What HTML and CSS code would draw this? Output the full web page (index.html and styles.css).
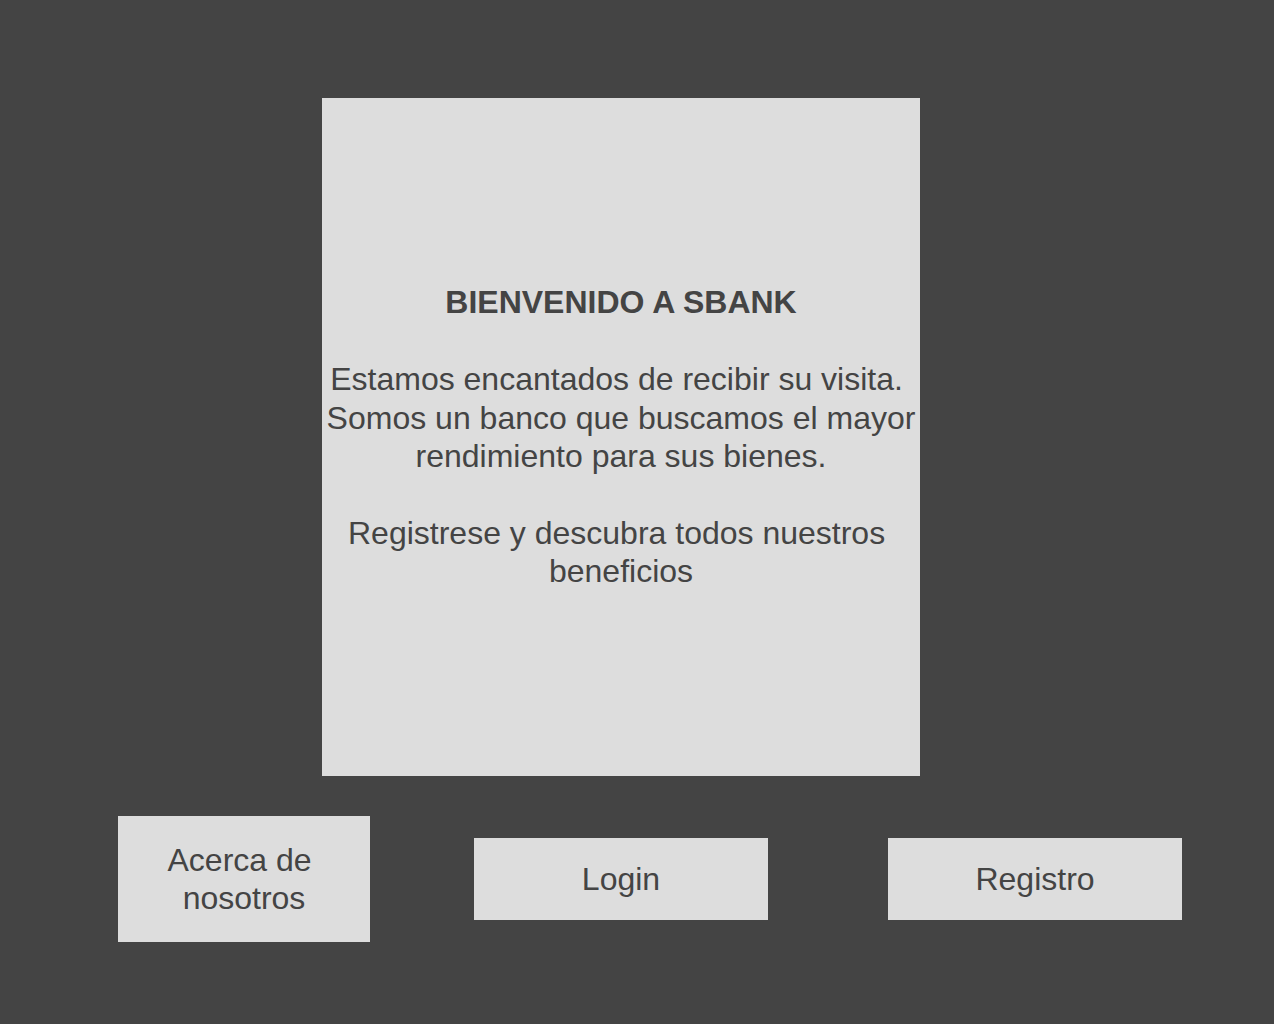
FILE: index.html
```html
<!DOCTYPE html>
<html lang="es">
<head>
    <meta charset="UTF-8">
    <meta name="viewport" content="width=device-width, initial-scale=1.0">
    <title>SBank</title>
    <link rel="stylesheet" href="styles.css">
</head>
<body>
<div class="page">
    <div class="welcome-panel">
        <div class="welcome-text">
            <strong>BIENVENIDO A SBANK</strong><br><br>
            Estamos encantados de recibir su visita.&nbsp; Somos un banco que buscamos el mayor rendimiento para sus bienes.<br><br>
            Registrese y descubra todos nuestros&nbsp; beneficios
        </div>
    </div>

    <div class="nav-buttons">
        <a class="nav-button about-button" href="#">Acerca de&nbsp; nosotros</a>
        <a class="nav-button" href="#">Login</a>
        <a class="nav-button" href="#">Registro</a>
    </div>
</div>
</body>
</html>
```

FILE: styles.css
```css
body {
    margin: 0;
    padding: 0;
    background: #444444;
    font-family: 'Liberation Sans', Arial, Helvetica, sans-serif;
    color: #444444;
    min-height: 100vh;
}

.page {
    width: 1242px;
    padding-top: 98px;
    display: flex;
    flex-direction: column;
    align-items: center;
}

.welcome-panel {
    width: 598px;
    height: 678px;
    background: #dddddd;
    display: flex;
    align-items: center;
    justify-content: center;
    text-align: center;
}

.welcome-text {
    width: 100%;
    font-size: 32px;
    line-height: 1.2;
}

.nav-buttons {
    align-self: stretch;
    display: grid;
    grid-template-columns: 356px 414px 294px;
    align-items: center;
    padding-left: 118px;
    margin-top: 40px;
}

.nav-button {
    display: flex;
    align-items: center;
    justify-content: center;
    width: 294px;
    height: 82px;
    background: #dddddd;
    color: #444444;
    font-size: 32px;
    line-height: 1.2;
    text-align: center;
    text-decoration: none;
    box-sizing: border-box;
}

.about-button {
    width: 252px;
    height: 126px;
}
```
